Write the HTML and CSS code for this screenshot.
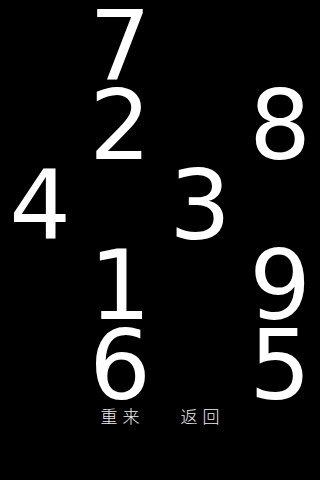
FILE: index.html
```html
<!DOCTYPE html>
<html lang="zh">
<head>
<meta charset="utf-8">
<title>数字</title>
<link rel="stylesheet" href="styles.css">
</head>
<body>
<main class="board">
  <div class="cell"></div><div class="cell"><span class="num">7</span></div><div class="cell"></div><div class="cell"></div>
  <div class="cell"></div><div class="cell"><span class="num">2</span></div><div class="cell"></div><div class="cell"><span class="num">8</span></div>
  <div class="cell"><span class="num">4</span></div><div class="cell"></div><div class="cell"><span class="num">3</span></div><div class="cell"></div>
  <div class="cell"></div><div class="cell"><span class="num">1</span></div><div class="cell"></div><div class="cell"><span class="num">9</span></div>
  <div class="cell"></div><div class="cell"><span class="num">6</span></div><div class="cell"></div><div class="cell"><span class="num">5</span></div>
</main>
<nav class="actions">
  <span class="slot"></span>
  <button class="btn">重来</button>
  <button class="btn">返回</button>
  <span class="slot"></span>
</nav>
</body>
</html>
```
FILE: styles.css
```css
html, body {
  margin: 0;
  padding: 0;
  background: #000;
  width: 320px;
  height: 480px;
  overflow: hidden;
}
.board {
  display: grid;
  grid-template-columns: repeat(4, 80px);
  grid-template-rows: repeat(5, 80px);
}
.cell {
  display: flex;
  justify-content: center;
  align-items: flex-start;
  box-sizing: border-box;
  padding-top: 11px;
  height: 80px;
}
.num {
  font-family: "DejaVu Sans", sans-serif;
  font-size: 97px;
  line-height: 69px;
  height: 69px;
  color: #fff;
}
.actions {
  display: grid;
  grid-template-columns: repeat(4, 80px);
  padding-top: 7px;
}
.btn {
  background: none;
  border: 0;
  padding: 0 0 0 5px;
  margin: 0;
  font-family: "Noto Sans CJK SC", sans-serif;
  font-weight: 300;
  font-size: 17px;
  line-height: 1;
  letter-spacing: 5px;
  color: #eee;
  text-align: center;
}
```
